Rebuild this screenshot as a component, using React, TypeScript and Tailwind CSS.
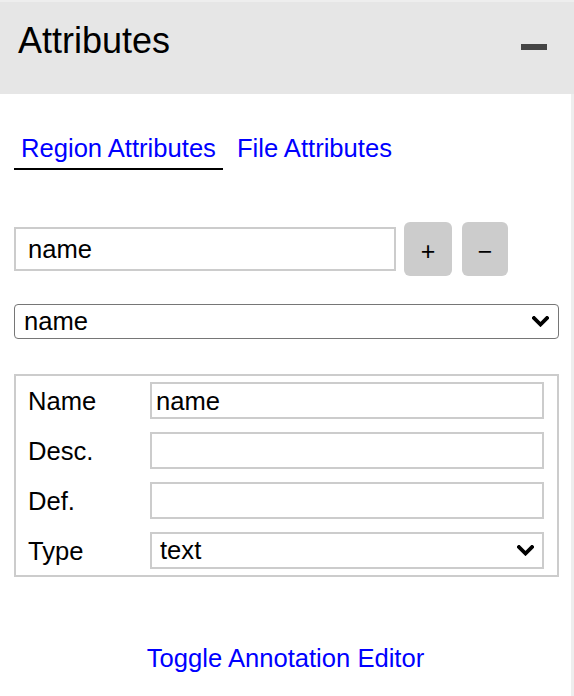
import React from "react";

function Chevron() {
  return (
    <svg width="17" height="11" viewBox="0 0 17 11" fill="none">
      <path d="M2 2 L8.5 8.5 L15 2" stroke="#000" strokeWidth="3.8" strokeLinecap="square" />
    </svg>
  );
}

const fields = [
  { label: "Name", value: "name" },
  { label: "Desc.", value: "" },
  { label: "Def.", value: "" },
];

export default function App() {
  return (
    <div className="w-[574px] h-[696px] bg-white flex flex-col font-['Liberation_Sans',Arial,sans-serif] text-black">
      {/* header */}
      <div className="h-[94px] shrink-0 bg-[#e6e6e6] border-t-2 border-[#eeeeee] flex items-start justify-between pl-[18px] pr-[27px]">
        <h1 className="mt-[21px] text-[36px] leading-none">Attributes</h1>
        <div className="mt-[42px] w-[26px] h-[6px] bg-[#444444]" />
      </div>

      <div className="flex-1 flex flex-col border-r-[3px] border-[#eeeeee]">
        {/* tabs */}
        <div className="mt-[41px] ml-[14px] flex gap-[7px] text-[25.6px] leading-none text-[#0000ff]">
          <div className="px-[7px] pt-[1px] pb-[6px] border-b-2 border-black">Region Attributes</div>
          <div className="px-[7px] pt-[1px] pb-[6px] border-b-2 border-transparent">File Attributes</div>
        </div>

        {/* new attribute row */}
        <div className="mt-[52px] ml-[14px] flex items-center">
          <input
            readOnly
            value="name"
            className="w-[382px] h-[44px] border-2 border-[#cccccc] pl-[12px] pt-[2px] text-[25.6px] outline-none"
          />
          <button className="ml-[8px] w-[48px] h-[54px] rounded-[6px] bg-[#cccccc] text-[25px] leading-none pt-[5px]">+</button>
          <button className="ml-[10px] w-[46px] h-[54px] rounded-[6px] bg-[#cccccc] text-[25px] leading-none pt-[5px]">−</button>
        </div>

        {/* attribute select */}
        <div className="mt-[28px] ml-[14px] w-[545px] h-[35px] border border-[#767676] rounded-[4px] flex items-center justify-between pl-[9px] pr-[9px]">
          <span className="text-[25.6px] leading-none pt-[2px]">name</span>
          <Chevron />
        </div>

        {/* attribute properties */}
        <div className="mt-[35px] ml-[14px] w-[545px] border-2 border-[#cccccc] pl-[12px] pr-[13px] py-[6px] grid grid-cols-[122px_394px] gap-y-[13px] items-center">
          {fields.map((f) => (
            <React.Fragment key={f.label}>
              <span className="text-[25.6px] leading-none pt-[3px]">{f.label}</span>
              <input
                readOnly
                value={f.value}
                className="h-[37px] border-2 border-[#cccccc] pl-[4px] pt-[2px] text-[25.6px] outline-none"
              />
            </React.Fragment>
          ))}
          <span className="text-[25.6px] leading-none pt-[3px]">Type</span>
          <div className="h-[37px] border-2 border-[#cccccc] flex items-center justify-between pl-[8px] pr-[8px]">
            <span className="text-[25.6px] leading-none pt-[2px]">text</span>
            <Chevron />
          </div>
        </div>

        <div className="mt-[69px] text-center text-[25.6px] leading-none text-[#0000ff]">Toggle Annotation Editor</div>
      </div>
    </div>
  );
}
